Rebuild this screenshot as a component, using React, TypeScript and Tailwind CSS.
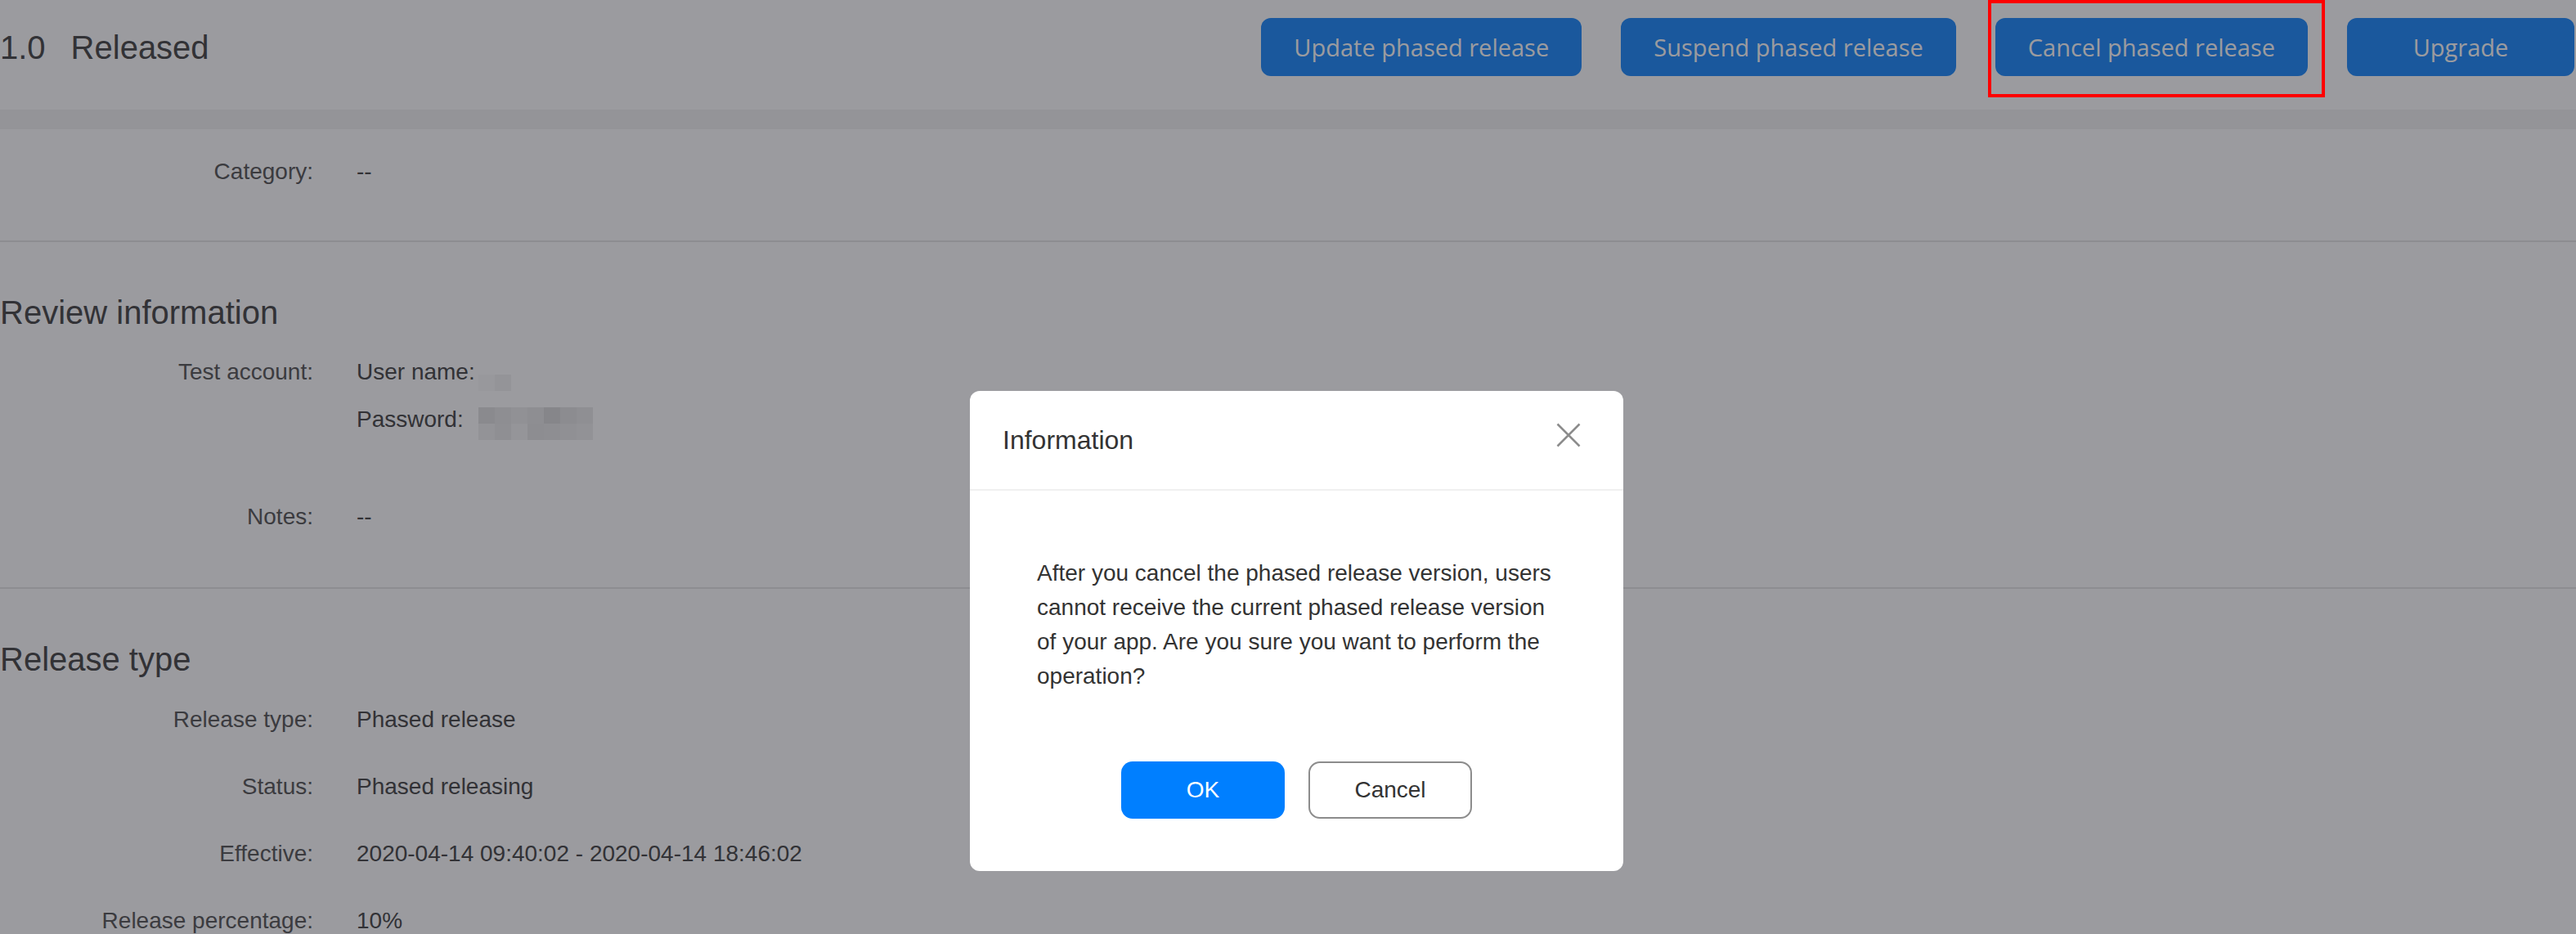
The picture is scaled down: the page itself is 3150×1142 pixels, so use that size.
import React from 'react'

const headerActions = [
  'Update phased release',
  'Suspend phased release',
  'Cancel phased release',
  'Upgrade',
]

// mosaic used to hide the test account credentials
const userCells = ['bg-[#fafafa]', 'bg-[#f4f4f4]']
const passwordCells = [
  'bg-[#e3e3e3]', 'bg-[#e9e9e9]', 'bg-[#eeeeee]', 'bg-[#e9e9e9]', 'bg-[#dcdcdc]', 'bg-[#e6e6e6]', 'bg-[#ebebeb]',
  'bg-[#f2f2f2]', 'bg-[#ebebeb]', 'bg-[#f5f5f5]', 'bg-[#e8e8e8]', 'bg-[#e9e9e9]', 'bg-[#ededed]', 'bg-[#f0f0f0]',
]

function Field({ label, children }: { label: string; children: React.ReactNode }) {
  return (
    <div className="grid grid-cols-[383px_1fr] gap-x-[53px] text-[28px] leading-[32px]">
      <div className="text-right text-[#606060]">{label}:</div>
      <div className="text-[#505050]">{children}</div>
    </div>
  )
}

function SectionTitle({ children }: { children: React.ReactNode }) {
  return <h2 className="text-[40px] leading-[48px] font-normal text-[#505050]">{children}</h2>
}

function Divider() {
  return <div className="h-[2px] bg-[#e8e8e8]" />
}

export default function App() {
  return (
    <div className="relative w-[3150px] h-[1142px] overflow-hidden bg-white font-['Liberation_Sans',sans-serif]">
      {/* Header */}
      <div className="h-[134px] pt-[22px] pr-[2px]">
        <div className="flex h-[71px] items-center justify-between">
          <div className="flex items-center gap-[31px] text-[40px] leading-[48px] text-[#505050]">
            <span>1.0</span>
            <span>Released</span>
          </div>
          <div className="flex items-center gap-[48px]">
            {headerActions.map((action) => (
              <button
                key={action}
                className="h-[71px] min-w-[278px] rounded-[12px] bg-[#2890fc] px-[40px] font-['Open_Sans',sans-serif] text-[29px] text-white"
              >
                {action}
              </button>
            ))}
          </div>
        </div>
      </div>
      <div className="h-[24px] bg-[#f4f4f4]" />

      {/* Category */}
      <div className="pt-[36px] pb-[68px]">
        <Field label="Category">--</Field>
      </div>
      <Divider />

      {/* Review information */}
      <div className="pt-[62px] pb-[70px]">
        <SectionTitle>Review information</SectionTitle>
        <div className="mt-[33px]">
          <Field label="Test account">
            <div className="grid grid-cols-[auto_1fr] gap-x-[4px] gap-y-[26px]">
              <div className="h-[32px]">User name:</div>
              <div className="h-[32px]">
                <div className="mt-[19px] flex">
                  {userCells.map((c, i) => (
                    <div key={i} className={`h-[20px] w-[20px] ${c}`} />
                  ))}
                </div>
              </div>
              <div className="h-[32px]">Password:</div>
              <div className="h-[32px]">
                <div className="mt-[1px] flex w-[140px] flex-wrap">
                  {passwordCells.map((c, i) => (
                    <div key={i} className={`h-[20px] w-[20px] ${c}`} />
                  ))}
                </div>
              </div>
            </div>
          </Field>
        </div>
        <div className="mt-[87px]">
          <Field label="Notes">--</Field>
        </div>
      </div>
      <Divider />

      {/* Release type */}
      <div className="pt-[62px]">
        <SectionTitle>Release type</SectionTitle>
        <div className="mt-[34px] flex flex-col gap-[50px]">
          <Field label="Release type">Phased release</Field>
          <Field label="Status">Phased releasing</Field>
          <Field label="Effective">2020-04-14 09:40:02 - 2020-04-14 18:46:02</Field>
          <Field label="Release percentage">10%</Field>
        </div>
      </div>

      {/* Modal mask */}
      <div className="absolute inset-0 bg-[rgba(4,6,16,0.4)]" />

      {/* Highlight around the clicked action */}
      <div className="absolute left-[2431px] top-0 h-[119px] w-[412px] border-[4px] border-[#ff0000]" />

      {/* Dialog */}
      <div className="absolute left-[1186px] top-[478px] flex h-[587px] w-[799px] flex-col rounded-[12px] bg-white">
        <div className="flex h-[122px] items-center justify-between border-b-[2px] border-[#f0f0f0] pl-[40px] pr-[52px]">
          <span className="text-[32px] leading-[32px] text-[#333333]">Information</span>
          <svg className="mb-[12px]" width="30" height="30" viewBox="0 0 30 30" fill="none">
            <path d="M1.5 1.5L28.5 28.5M28.5 1.5L1.5 28.5" stroke="#8c8c8c" strokeWidth="2.5" />
          </svg>
        </div>
        <div className="px-[82px] pt-[80px] text-[28px] leading-[42px] text-[#333333]">
          After you cancel the phased release version, users cannot receive the current phased release version of
          your app. Are you sure you want to perform the operation?
        </div>
        <div className="mt-auto flex justify-center gap-[29px] pb-[64px]">
          <button className="h-[70px] w-[200px] rounded-[14px] bg-[#007fff] text-[28px] text-white">OK</button>
          <button className="h-[70px] w-[200px] rounded-[14px] border-[2px] border-[#8c8c8c] bg-white text-[28px] text-[#333333]">
            Cancel
          </button>
        </div>
      </div>
    </div>
  )
}
